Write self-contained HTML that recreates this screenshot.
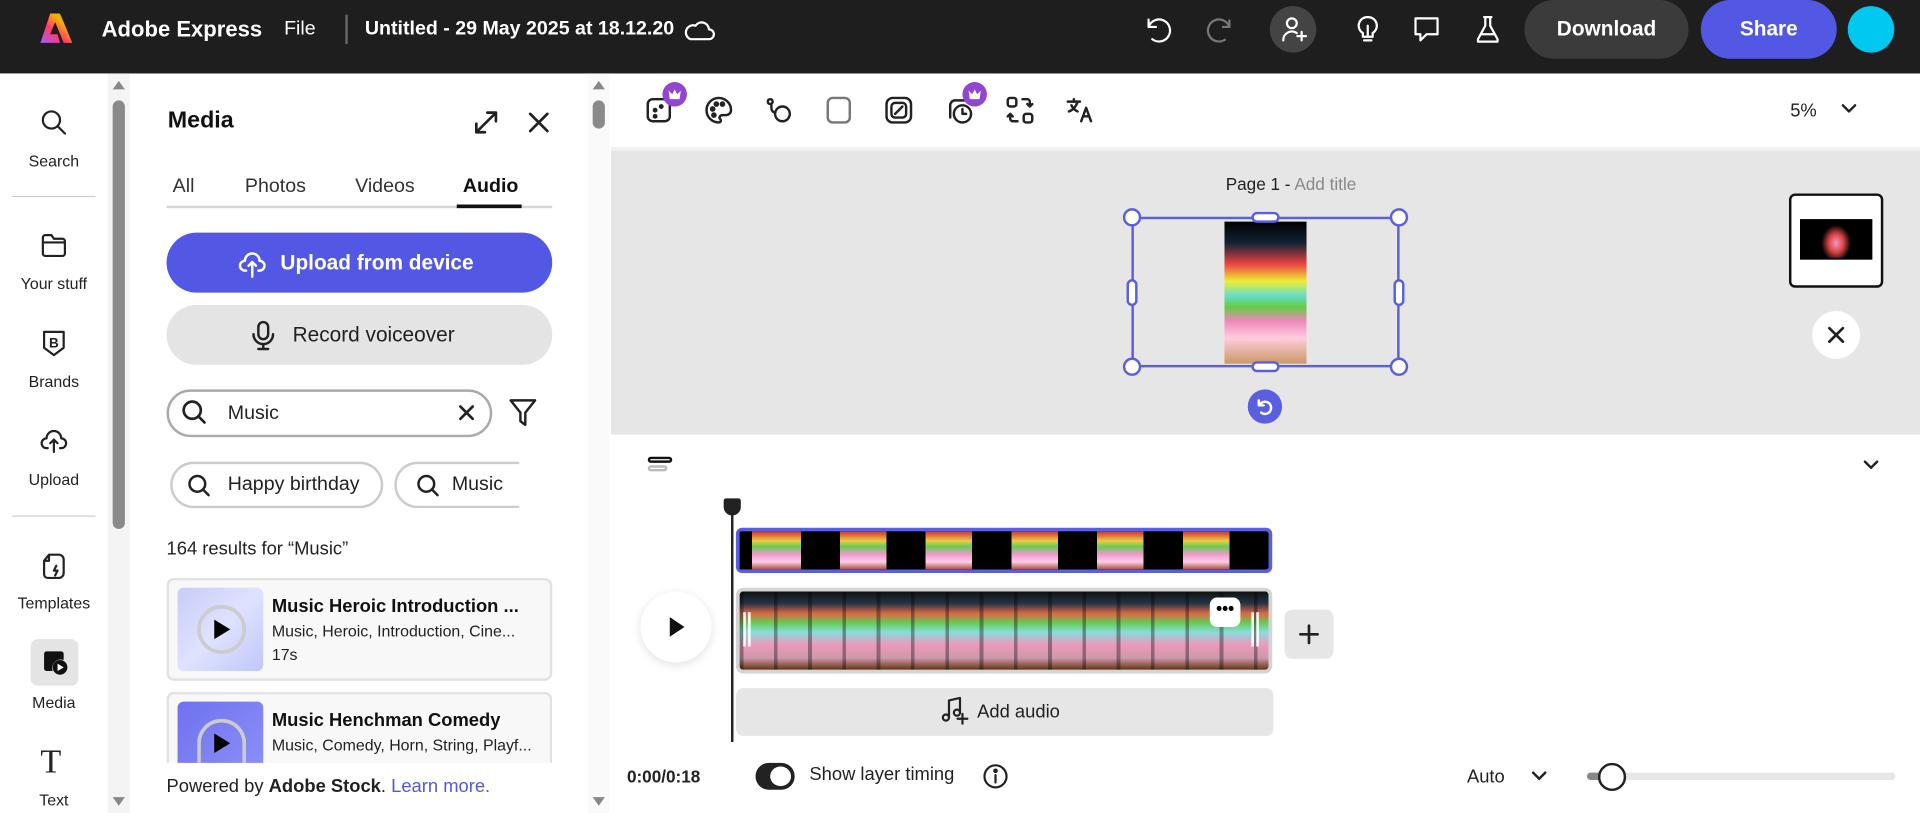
<!DOCTYPE html>
<html><head><meta charset="utf-8"><style>
*{box-sizing:border-box;margin:0;padding:0}
body{width:1920px;height:813px;overflow:hidden;background:#fff;font-family:"Liberation Sans",sans-serif;}
#w{width:1568px;height:664px;position:relative;transform:scale(1.22449);transform-origin:0 0;}
.a{position:absolute}
.hdr{left:0;top:0;width:1568px;height:60px;background:#1e1e1e;color:#fff}
.ic{stroke:#222;fill:none;stroke-width:1.8;stroke-linecap:round;stroke-linejoin:round}
.wi{stroke:#fff;fill:none;stroke-width:1.8;stroke-linecap:round;stroke-linejoin:round}
.rail{font-size:13px;color:#222;text-align:center;width:88px}
.pill{border-radius:25px}
.cake{background-color:#000;background-image:
 linear-gradient(180deg,#d33 0%,#ec4 25%,#6c5 40%,#e9c 60%,#fce 80%,#a53 100%);
 background-size:40px 100%;background-repeat:repeat-x;background-position:10px 0;
 -webkit-mask:none;}
.cakewrap{background:#000}
.cake2{background:
 repeating-linear-gradient(90deg,rgba(0,0,0,.35) 0 3px,transparent 3px 28px),
 linear-gradient(180deg,#111 0%,#234 15%,#d64 28%,#6c5 40%,#8dd 52%,#e9b 68%,#c9a 85%,#631 100%);}
</style></head><body><div id="w">
<div class="a hdr">
 <svg class="a" style="left:30px;top:9px" width="30" height="28" viewBox="0 0 30 28"><defs><linearGradient id="g" x1="0" y1="1" x2="1" y2="0"><stop offset="0" stop-color="#a05cff"/><stop offset=".4" stop-color="#ff3b6a"/><stop offset=".7" stop-color="#ffb000"/><stop offset="1" stop-color="#00d66b"/></linearGradient></defs><path d="M11 2h8l10 24h-7l-7-17-4 10h6l2 7H3z" fill="url(#g)"/></svg>
 <div class="a" style="left:83px;top:14px;font-size:18px;font-weight:bold">Adobe Express</div>
 <div class="a" style="left:232px;top:15px;font-size:16px">File</div>
 <div class="a" style="left:282px;top:12px;width:2px;height:24px;background:#666"></div>
 <div class="a" style="left:298px;top:15px;font-size:16px;font-weight:bold">Untitled - 29 May 2025 at 18.12.20</div>
 <svg class="a wi" style="left:557px;top:12px" width="28" height="24" viewBox="0 0 28 24"><path d="M7 20h15a4 4 0 0 0 0-8 6 6 0 0 0-11-3 5 5 0 0 0-4 11z"/></svg>
 <svg class="a wi" style="left:933px;top:12px" width="26" height="24" viewBox="0 0 26 24"><path d="M5 4v6h6M5 10a9 9 0 1 1 3 10"/></svg>
 <svg class="a" style="left:983px;top:12px;stroke:#777;fill:none;stroke-width:1.8" width="26" height="24" viewBox="0 0 26 24"><path d="M21 4v6h-6M21 10a9 9 0 1 0-3 10"/></svg>
 <div class="a" style="left:1037px;top:5px;width:38px;height:38px;border-radius:50%;background:#444"></div>
 <svg class="a wi" style="left:1045px;top:12px" width="24" height="24" viewBox="0 0 24 24"><circle cx="10" cy="7" r="4"/><path d="M3 21a7 7 0 0 1 11-6M18 14v7M14.5 17.5h7"/></svg>
 <svg class="a wi" style="left:1106px;top:12px" width="22" height="24" viewBox="0 0 22 24"><path d="M11 2a7 7 0 0 0-4 13v3h8v-3a7 7 0 0 0-4-13zM8 21h6M11 9v9"/></svg>
 <svg class="a wi" style="left:1153px;top:12px" width="24" height="24" viewBox="0 0 24 24"><path d="M3 3h18v13h-9l-5 5v-5H3z"/></svg>
 <svg class="a wi" style="left:1204px;top:12px" width="22" height="24" viewBox="0 0 22 24"><path d="M8 2h6M9 2v7l-6 11v2h16v-2L13 9V2M6 16h10"/></svg>
 <div class="a pill" style="left:1245px;top:0;width:134px;height:48px;background:#3b3b3b;font-size:17px;font-weight:bold;text-align:center;line-height:48px">Download</div>
 <div class="a pill" style="left:1389px;top:0;width:111px;height:48px;background:#5258e4;font-size:17px;font-weight:bold;text-align:center;line-height:48px">Share</div>
 <div class="a" style="left:1509px;top:5px;width:38px;height:38px;border-radius:50%;background:#00c8f0"></div>
</div>
<div class="a" style="left:0;top:60px;width:88px;height:604px;background:#fff"></div>
<svg class="a ic" style="left:32px;top:88px" width="24" height="24" viewBox="0 0 24 24"><circle cx="10" cy="10" r="7"/><path d="M15 15l6 6"/></svg>
<div class="a rail" style="left:0;top:124px">Search</div>
<div class="a" style="left:10px;top:160px;width:68px;height:1px;background:#ccc"></div>
<svg class="a ic" style="left:32px;top:188px" width="24" height="24" viewBox="0 0 24 24"><path d="M3 6a2 2 0 0 1 2-2h5l2 3h7a2 2 0 0 1 2 2v10a2 2 0 0 1-2 2H5a2 2 0 0 1-2-2zM3 10h18"/></svg>
<div class="a rail" style="left:0;top:224px">Your stuff</div>
<svg class="a ic" style="left:32px;top:268px" width="24" height="24" viewBox="0 0 24 24"><path d="M4 3h16v13l-8 6-8-6z"/><text x="8" y="16" font-size="11" font-weight="bold" fill="#222" stroke="none" font-family="Liberation Sans">B</text></svg>
<div class="a rail" style="left:0;top:304px">Brands</div>
<svg class="a ic" style="left:32px;top:348px" width="24" height="24" viewBox="0 0 24 24"><path d="M7 18H6a4 4 0 0 1 0-8 6 6 0 0 1 12 0 4 4 0 0 1 0 8h-1M12 11v10M9 14l3-3 3 3"/></svg>
<div class="a rail" style="left:0;top:384px">Upload</div>
<div class="a" style="left:10px;top:421px;width:68px;height:1px;background:#ccc"></div>
<svg class="a ic" style="left:32px;top:450px" width="24" height="26" viewBox="0 0 24 26"><path d="M8 3h8a4 4 0 0 1 4 4v11a4 4 0 0 1-4 4H7a3 3 0 0 1-3-3V8zM8 3v5H4M14 12l-2 4h3l-2 4"/></svg>
<div class="a rail" style="left:0;top:485px">Templates</div>
<div class="a" style="left:25px;top:522px;width:39px;height:38px;border-radius:6px;background:#e4e4e4"></div>
<svg class="a" style="left:33px;top:529px" width="24" height="24" viewBox="0 0 24 24"><path d="M3 5a2 2 0 0 1 2-2h12a2 2 0 0 1 2 2v5a7 7 0 0 0-9 9H5a2 2 0 0 1-2-2z" fill="#111"/><circle cx="16" cy="16" r="6" fill="#111"/><path d="M14 13v6l5-3z" fill="#fff"/></svg>
<div class="a rail" style="left:0;top:566px">Media</div>
<div class="a" style="left:33px;top:607px;font-family:'Liberation Serif',serif;font-size:28px;color:#222">T</div>
<div class="a rail" style="left:0;top:646px">Text</div>
<div class="a" style="left:88px;top:60px;width:18px;height:604px;background:#f4f4f4"></div>
<div class="a" style="left:92px;top:66px;width:0;height:0;border:5px solid transparent;border-bottom:7px solid #888;border-top:0"></div>
<div class="a" style="left:92px;top:82px;width:10px;height:350px;border-radius:5px;background:#8a8a8a"></div>
<div class="a" style="left:92px;top:651px;width:0;height:0;border:5px solid transparent;border-top:7px solid #888;border-bottom:0"></div>
<div class="a" style="left:137px;top:88px;font-size:19px;font-weight:bold;color:#111">Media</div>
<svg class="a ic" style="left:385px;top:88px;stroke-width:2.2" width="24" height="24" viewBox="0 0 24 24"><path d="M4 20L20 4M13 4h7v7M4 13v7h7"/></svg>
<svg class="a ic" style="left:430px;top:90px;stroke-width:2.2" width="20" height="20" viewBox="0 0 20 20"><path d="M3 3l14 14M17 3L3 17"/></svg>
<div class="a" style="left:141px;top:144px;font-size:16px;color:#333">All</div>
<div class="a" style="left:200px;top:144px;font-size:16px;color:#333">Photos</div>
<div class="a" style="left:290px;top:144px;font-size:16px;color:#333">Videos</div>
<div class="a" style="left:378px;top:144px;font-size:16px;color:#111;font-weight:bold">Audio</div>
<div class="a" style="left:136px;top:168px;width:315px;height:2px;background:#d6d6d6"></div>
<div class="a" style="left:373px;top:167px;width:53px;height:3px;background:#111"></div>
<div class="a pill" style="left:136px;top:190px;width:315px;height:49px;background:#5258e4;color:#fff;font-size:17px;font-weight:bold;line-height:49px;padding-left:93px">Upload from device</div>
<svg class="a wi" style="left:193px;top:203px;stroke-width:2" width="26" height="24" viewBox="0 0 26 24"><path d="M8 18H7a4 4 0 0 1 0-8 6 6 0 0 1 12 0 4 4 0 0 1 0 8h-1M13 11v12M10 14l3-3 3 3"/></svg>
<div class="a pill" style="left:136px;top:249px;width:315px;height:49px;background:#e4e4e4;color:#222;font-size:17px;line-height:49px;padding-left:103px">Record voiceover</div>
<svg class="a ic" style="left:204px;top:261px;stroke-width:2" width="22" height="26" viewBox="0 0 22 26"><rect x="7" y="2" width="8" height="14" rx="4"/><path d="M3 12a8 8 0 0 0 16 0M11 20v4M7 24h8"/></svg>
<div class="a pill" style="left:136px;top:318px;width:266px;height:39px;border:2px solid #aaa;font-size:16px;line-height:35px;padding-left:48px;color:#222">Music</div>
<svg class="a ic" style="left:147px;top:325px;stroke-width:2.2" width="24" height="24" viewBox="0 0 24 24"><circle cx="10" cy="10" r="7"/><path d="M15 15l5 5"/></svg>
<svg class="a ic" style="left:374px;top:330px;stroke-width:2.2" width="14" height="14" viewBox="0 0 14 14"><path d="M2 2l10 10M12 2L2 12"/></svg>
<svg class="a ic" style="left:414px;top:324px;stroke-width:2" width="26" height="26" viewBox="0 0 26 26"><path d="M3 3h20l-8 10v10l-4-3v-7z"/></svg>
<div class="a pill" style="left:139px;top:377px;width:174px;height:38px;border:2px solid #ccc;font-size:16px;line-height:34px;padding-left:45px;color:#222">Happy birthday</div>
<svg class="a ic" style="left:152px;top:386px;stroke-width:2.2" width="22" height="22" viewBox="0 0 24 24"><circle cx="10" cy="10" r="7"/><path d="M15 15l5 5"/></svg>
<div class="a" style="left:322px;top:377px;width:102px;height:38px;overflow:hidden"><div class="pill" style="width:130px;height:38px;border:2px solid #ccc;font-size:16px;line-height:34px;padding-left:45px;color:#222">Music</div></div>
<svg class="a ic" style="left:339px;top:386px;stroke-width:2.2" width="22" height="22" viewBox="0 0 24 24"><circle cx="10" cy="10" r="7"/><path d="M15 15l5 5"/></svg>
<div class="a" style="left:136px;top:440px;font-size:15px;color:#222">164 results for “Music”</div>
<div class="a" style="left:136px;top:472px;width:315px;height:84px;border:2px solid #e2e2e2;border-radius:6px;background:#f8f8f8"></div>
<div class="a" style="left:145px;top:480px;width:70px;height:68px;border-radius:5px;background:linear-gradient(135deg,#c8ccf8,#dfe2ff 50%,#c0c6fa)"></div>
<div class="a" style="left:161px;top:494px;width:40px;height:40px;border-radius:50%;border:3px solid #ccc"></div>
<svg class="a" style="left:172px;top:504px" width="18" height="20"><path d="M3 2v16l13-8z" fill="#000"/></svg>
<div class="a" style="left:222px;top:487px;font-size:15px;font-weight:bold;color:#111">Music Heroic Introduction ...</div>
<div class="a" style="left:222px;top:508px;font-size:13px;color:#222">Music, Heroic, Introduction, Cine...</div>
<div class="a" style="left:222px;top:527px;font-size:13px;color:#222">17s</div>
<div class="a" style="left:136px;top:565px;width:315px;height:58px;border:2px solid #e2e2e2;border-bottom:0;border-radius:6px 6px 0 0;background:#f8f8f8;overflow:hidden"></div>
<div class="a" style="left:145px;top:573px;width:70px;height:50px;border-radius:5px 5px 0 0;background:linear-gradient(135deg,#6e72ee,#8a8ef6)"></div>
<div class="a" style="left:161px;top:587px;width:40px;height:36px;border-radius:20px 20px 0 0;border:3px solid #ccc;border-bottom:0"></div>
<svg class="a" style="left:172px;top:597px" width="18" height="20"><path d="M3 2v16l13-8z" fill="#000"/></svg>
<div class="a" style="left:222px;top:580px;font-size:15px;font-weight:bold;color:#111">Music Henchman Comedy</div>
<div class="a" style="left:222px;top:601px;font-size:13px;color:#222">Music, Comedy, Horn, String, Playf...</div>
<div class="a" style="left:136px;top:634px;font-size:15px;color:#222">Powered by <b>Adobe Stock</b>. <span style="color:#5258e4">Learn more.</span></div>
<div class="a" style="left:480px;top:60px;width:18px;height:604px;background:#fafafa"></div>
<div class="a" style="left:484px;top:66px;width:0;height:0;border:5px solid transparent;border-bottom:7px solid #888;border-top:0"></div>
<div class="a" style="left:484px;top:82px;width:10px;height:23px;border-radius:5px;background:#8a8a8a"></div>
<div class="a" style="left:484px;top:651px;width:0;height:0;border:5px solid transparent;border-top:7px solid #888;border-bottom:0"></div>
<div class="a" style="left:499px;top:120px;width:1069px;height:3px;background:#f2f2f2"></div>
<svg class="a ic" style="left:527px;top:78px;stroke-width:2" width="24" height="24" viewBox="0 0 24 24"><rect x="2" y="3" width="18" height="18" rx="4"/><circle cx="8" cy="12" r="1" fill="#222"/><circle cx="13" cy="9" r="1" fill="#222"/><circle cx="8" cy="17" r="1" fill="#222"/></svg>
<div class="a" style="left:541px;top:67px;width:20px;height:20px;border-radius:50%;background:#9046d0"></div>
<svg class="a" style="left:545px;top:71px" width="12" height="11"><path d="M1 3l3 3 2-4 2 4 3-3-1 7H2z" fill="#fff"/></svg>
<svg class="a ic" style="left:575px;top:78px;stroke-width:2" width="24" height="24" viewBox="0 0 24 24"><path d="M12 2a10 10 0 0 0 0 20c2 0 2-2 1-3s0-3 2-3h3a4 4 0 0 0 4-4c0-6-5-10-10-10z"/><circle cx="7" cy="11" r="1.3" fill="#222"/><circle cx="10" cy="7" r="1.3" fill="#222"/><circle cx="15" cy="7" r="1.3" fill="#222"/><circle cx="8" cy="16" r="1.3" fill="#222"/></svg>
<svg class="a ic" style="left:624px;top:78px;stroke-width:2" width="24" height="24" viewBox="0 0 24 24"><circle cx="15" cy="15" r="6"/><circle cx="5" cy="5" r="2"/><path d="M6 8v3a4 4 0 0 0 3 3"/></svg>
<svg class="a" style="left:673px;top:78px;stroke:#777;fill:none;stroke-width:2" width="24" height="24" viewBox="0 0 24 24"><rect x="3" y="2" width="18" height="20" rx="4"/></svg>
<svg class="a ic" style="left:722px;top:78px;stroke-width:2" width="24" height="24" viewBox="0 0 24 24"><rect x="2" y="2" width="20" height="20" rx="5"/><rect x="6" y="6" width="12" height="12" rx="3"/><path d="M9 15l6-6"/></svg>
<svg class="a ic" style="left:772px;top:78px;stroke-width:2" width="24" height="24" viewBox="0 0 24 24"><path d="M4 18V8a4 4 0 0 1 4-4h8"/><circle cx="14" cy="15" r="7"/><path d="M14 11v4h3"/></svg>
<div class="a" style="left:786px;top:67px;width:20px;height:20px;border-radius:50%;background:#9046d0"></div>
<svg class="a" style="left:790px;top:71px" width="12" height="11"><path d="M1 3l3 3 2-4 2 4 3-3-1 7H2z" fill="#fff"/></svg>
<svg class="a ic" style="left:821px;top:78px;stroke-width:2" width="24" height="24" viewBox="0 0 24 24"><rect x="2" y="2" width="7" height="7" rx="2"/><rect x="15" y="15" width="7" height="7" rx="2"/><path d="M14 3h4a2 2 0 0 1 2 2v4M18 7l2 2 2-2M10 21H6a2 2 0 0 1-2-2v-4M6 17l-2-2-2 2"/></svg>
<svg class="a ic" style="left:870px;top:78px;stroke-width:2" width="24" height="24" viewBox="0 0 24 24"><path d="M2 5h10M7 3v2M10 5c-1 4-4 7-7 8M5 8c1 2 3 4 5 5M13 21l4-11 4 11M14.5 17h5"/></svg>
<div class="a" style="left:1462px;top:82px;font-size:15px;color:#222">5%</div>
<svg class="a ic" style="left:1503px;top:83px;stroke-width:2" width="14" height="12" viewBox="0 0 14 12"><path d="M2 3l5 5 5-5"/></svg>
<div class="a" style="left:499px;top:123px;width:1069px;height:232px;background:#e6e6e6"></div>
<div class="a" style="left:1001px;top:142px;font-size:14px;color:#222">Page 1 - <span style="color:#888">Add title</span></div>
<div class="a" style="left:1000px;top:181px;width:67px;height:116px;background:linear-gradient(180deg,#000 0%,#123 15%,#e44 30%,#ee3 42%,#6dc 52%,#6c4 60%,#e8b 70%,#fcd 82%,#c96 100%)"></div>
<div class="a" style="left:924px;top:177px;width:219px;height:123px;border:2px solid #5a5fe0"></div>
<div class="a" style="left:917px;top:170px;width:15px;height:15px;border-radius:50%;border:2px solid #5a5fe0;background:#fff"></div>
<div class="a" style="left:1135px;top:170px;width:15px;height:15px;border-radius:50%;border:2px solid #5a5fe0;background:#fff"></div>
<div class="a" style="left:917px;top:292px;width:15px;height:15px;border-radius:50%;border:2px solid #5a5fe0;background:#fff"></div>
<div class="a" style="left:1135px;top:292px;width:15px;height:15px;border-radius:50%;border:2px solid #5a5fe0;background:#fff"></div>
<div class="a" style="left:1022px;top:173px;width:23px;height:9px;border-radius:5px;border:2px solid #5a5fe0;background:#fff"></div>
<div class="a" style="left:1022px;top:295px;width:23px;height:9px;border-radius:5px;border:2px solid #5a5fe0;background:#fff"></div>
<div class="a" style="left:920px;top:228px;width:9px;height:22px;border-radius:5px;border:2px solid #5a5fe0;background:#fff"></div>
<div class="a" style="left:1138px;top:228px;width:9px;height:22px;border-radius:5px;border:2px solid #5a5fe0;background:#fff"></div>
<div class="a" style="left:1019px;top:318px;width:28px;height:28px;border-radius:50%;background:#5a5fe0"></div>
<svg class="a wi" style="left:1024px;top:323px;stroke-width:2" width="18" height="18" viewBox="0 0 18 18"><path d="M4 4v4h4M4.5 8A5 5 0 1 1 6 14"/></svg>
<div class="a" style="left:1461px;top:158px;width:77px;height:77px;border:2px solid #111;border-radius:5px;background:#fff"></div>
<div class="a" style="left:1470px;top:179px;width:59px;height:33px;background:radial-gradient(ellipse 12px 15px at 50% 60%,#e9c 0%,#d44 50%,transparent 100%) #000;border:1px solid #000"></div>
<div class="a" style="left:1480px;top:254px;width:39px;height:39px;border-radius:50%;background:#fff"></div>
<svg class="a ic" style="left:1492px;top:266px;stroke-width:2.2" width="15" height="15" viewBox="0 0 15 15"><path d="M2 2l11 11M13 2L2 13"/></svg>
<div class="a" style="left:529px;top:373px;width:20px;height:5px;border-radius:3px;border:2px solid #111"></div>
<div class="a" style="left:529px;top:380px;width:16px;height:5px;border-radius:3px;border:2px solid #bbb"></div>
<svg class="a ic" style="left:1521px;top:374px;stroke-width:2" width="14" height="12" viewBox="0 0 14 12"><path d="M2 3l5 5 5-5"/></svg>
<div class="a" style="left:597px;top:410px;width:2px;height:196px;background:#222"></div>
<div class="a" style="left:591px;top:407px;width:14px;height:14px;background:#222;border-radius:2px 2px 7px 7px"></div>
<div class="a" style="left:601px;top:431px;width:438px;height:37px;border:3px solid #5a5fe0;border-radius:5px;background-color:#000;background-image:linear-gradient(180deg,#c33 0%,#ec4 25%,#6c5 40%,#e9c 60%,#fce 80%,#a53 100%);background-size:50px 100%;background-repeat:no-repeat;"></div>
<div class="a" style="left:604px;top:434px;width:432px;height:31px;background:repeating-linear-gradient(90deg,#000 0 10px,transparent 10px 50px,#000 50px 70px)"></div>
<div class="a" style="left:604px;top:434px;width:432px;height:31px;background:repeating-linear-gradient(90deg,transparent 0 10px,rgba(0,0,0,0) 10px),linear-gradient(180deg,#c33 0%,#ec4 25%,#6c5 40%,#e9c 60%,#fce 80%,#a53 100%);-webkit-mask:repeating-linear-gradient(90deg,transparent 0 12px,#000 12px 50px,transparent 50px 70px);mask:repeating-linear-gradient(90deg,transparent 0 12px,#000 12px 50px,transparent 50px 70px)"></div>
<div class="a cake2" style="left:601px;top:480px;width:438px;height:70px;border:3px solid #d4d4d4;border-radius:6px"></div>
<div class="a" style="left:607px;top:500px;width:2px;height:28px;background:#fff"></div>
<div class="a" style="left:611px;top:500px;width:2px;height:28px;background:#fff"></div>
<div class="a" style="left:1022px;top:500px;width:2px;height:28px;background:#fff"></div>
<div class="a" style="left:1026px;top:500px;width:2px;height:28px;background:#fff"></div>
<div class="a" style="left:988px;top:488px;width:25px;height:24px;border-radius:6px;background:#fff;font-size:14px;font-weight:bold;text-align:center;line-height:18px">•••</div>
<div class="a" style="left:523px;top:483px;width:58px;height:58px;border-radius:50%;background:#fff;box-shadow:0 2px 8px rgba(0,0,0,.12)"></div>
<svg class="a" style="left:545px;top:503px" width="16" height="18"><path d="M2 1v16l12-8z" fill="#111"/></svg>
<div class="a" style="left:1049px;top:498px;width:40px;height:40px;border-radius:6px;background:#e6e6e6"></div>
<svg class="a ic" style="left:1060px;top:509px;stroke-width:2.2" width="18" height="18" viewBox="0 0 18 18"><path d="M9 2v14M2 9h14"/></svg>
<div class="a" style="left:601px;top:562px;width:439px;height:39px;border-radius:6px;background:#e6e6e6;font-size:15px;color:#222;line-height:39px;padding-left:197px">Add audio</div>
<svg class="a ic" style="left:767px;top:568px;stroke-width:1.8" width="24" height="24" viewBox="0 0 24 24"><path d="M8 18V4l9-2v12"/><circle cx="5.5" cy="18" r="2.5"/><circle cx="14.5" cy="14" r="2.5"/><path d="M19 15v8M15 19h8"/></svg>
<div class="a" style="left:512px;top:626px;font-size:14px;font-weight:bold;color:#222">0:00/0:18</div>
<div class="a" style="left:617px;top:623px;width:32px;height:22px;border-radius:11px;background:#222"></div>
<div class="a" style="left:629px;top:626px;width:17px;height:16px;border-radius:50%;background:#fff"></div>
<div class="a" style="left:661px;top:624px;font-size:15px;color:#222">Show layer timing</div>
<svg class="a ic" style="left:802px;top:623px;stroke-width:1.8" width="22" height="22" viewBox="0 0 22 22"><circle cx="11" cy="11" r="9"/><path d="M11 10v6"/><circle cx="11" cy="6.5" r="1" fill="#222"/></svg>
<div class="a" style="left:1198px;top:626px;font-size:15px;color:#222">Auto</div>
<svg class="a ic" style="left:1250px;top:628px;stroke-width:2" width="14" height="12" viewBox="0 0 14 12"><path d="M2 3l5 5 5-5"/></svg>
<div class="a" style="left:1296px;top:631px;width:252px;height:6px;border-radius:3px;background:#e6e6e6"></div>
<div class="a" style="left:1296px;top:631px;width:16px;height:6px;border-radius:3px;background:#888"></div>
<div class="a" style="left:1305px;top:623px;width:23px;height:23px;border-radius:50%;border:2px solid #222;background:#fff"></div>
</div></body></html>
